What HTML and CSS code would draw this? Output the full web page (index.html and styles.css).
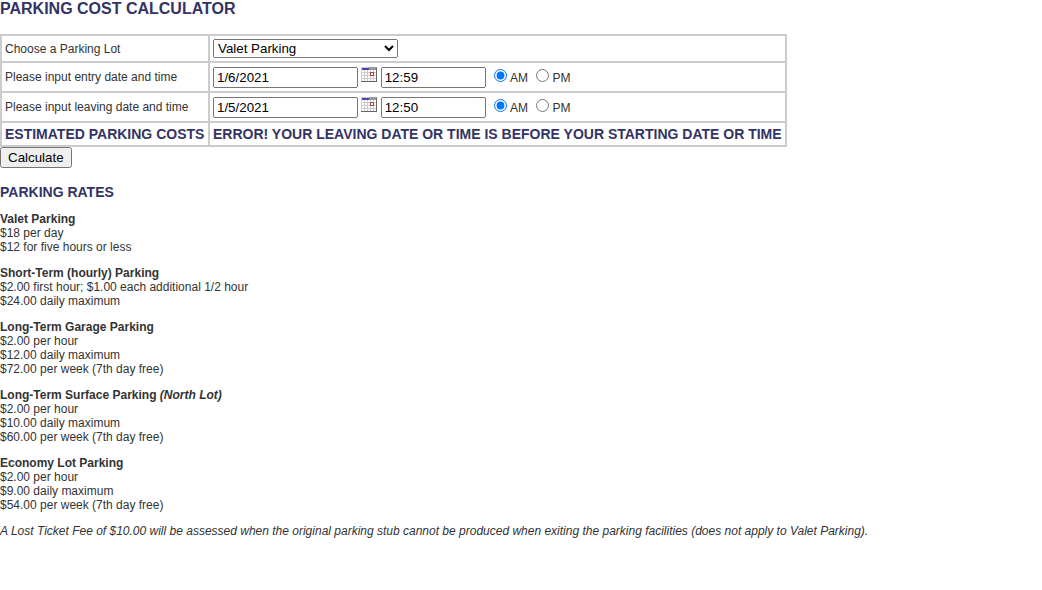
FILE: index.html
```
<!DOCTYPE html>
<html lang="en">
<head>
<meta charset="utf-8">
<title>Parking Cost Calculator</title>
<link rel="stylesheet" href="styles.css">
</head>
<body>
<svg class="defs" aria-hidden="true">
  <symbol id="calendar" viewBox="0 0 16 15">
    <path fill="#ccc" d="M0 0h16v15H0z"/>
    <path fill="#fff" d="M1 3h2v2H1zM4 3h2v2H4zM7 3h2v2H7zM10 3h2v2h-2zM13 3h2v2h-2zM1 6h2v2H1zM4 6h2v2H4zM7 6h2v2H7zM10 6h2v2h-2zM13 6h2v2h-2zM1 9h2v2H1zM4 9h2v2H4zM7 9h2v2H7zM10 9h2v2h-2zM13 9h2v2h-2zM1 12h2v2H1zM4 12h2v2H4zM7 12h2v2H7zM10 12h2v2h-2zM13 12h2v2h-2z"/>
    <path fill="#999" d="M8 0h8v3H8z"/>
    <path fill="#44a" d="M1 1h7v2H1z"/>
    <path fill="none" stroke="#a33" d="M9.500 5.500h3v3h-3z"/>
    <path fill="#666" d="M15 1h1v14H0v-1h15z"/>
  </symbol>
</svg>
<h1 class="title">PARKING COST CALCULATOR</h1>
<form>
  <table class="calculator">
    <tr>
      <td class="name"><label for="lot">Choose a Parking Lot</label></td>
      <td><select id="lot" class="lot"><option>Valet Parking</option><option>Short-Term Parking</option><option>Economy Parking</option><option>Long-Term Surface Parking</option><option>Long-Term Garage Parking</option></select></td>
    </tr>
    <tr>
      <td><label for="entry-date">Please input entry date and time</label></td>
      <td>
        <input id="entry-date" class="date" type="text" value="1/6/2021">
        <a href="#" aria-label="Pick entry date"><svg class="calendar"><use href="#calendar"/></svg></a>
        <input class="time" type="text" value="12:59" aria-label="Entry time">
        <input id="entry-am" type="radio" name="entry" checked><label for="entry-am">AM</label>
        <input id="entry-pm" type="radio" name="entry"><label for="entry-pm">PM</label>
      </td>
    </tr>
    <tr>
      <td><label for="exit-date">Please input leaving date and time</label></td>
      <td>
        <input id="exit-date" class="date" type="text" value="1/5/2021">
        <a href="#" aria-label="Pick leaving date"><svg class="calendar"><use href="#calendar"/></svg></a>
        <input class="time" type="text" value="12:50" aria-label="Leaving time">
        <input id="exit-am" type="radio" name="exit" checked><label for="exit-am">AM</label>
        <input id="exit-pm" type="radio" name="exit"><label for="exit-pm">PM</label>
      </td>
    </tr>
    <tr class="result">
      <td>ESTIMATED PARKING COSTS</td>
      <td>ERROR! YOUR LEAVING DATE OR TIME IS BEFORE YOUR STARTING DATE OR TIME</td>
    </tr>
  </table>
  <button class="calculate" type="submit">Calculate</button>
</form>
<h2 class="subtitle">PARKING RATES</h2>
<p><b>Valet Parking</b><br>$18 per day<br>$12 for five hours or less</p>
<p><b>Short-Term (hourly) Parking</b><br>$2.00 first hour; $1.00 each additional 1/2 hour<br>$24.00 daily maximum</p>
<p><b>Long-Term Garage Parking</b><br>$2.00 per hour<br>$12.00 daily maximum<br>$72.00 per week (7th day free)</p>
<p><b>Long-Term Surface Parking <i>(North Lot)</i></b><br>$2.00 per hour<br>$10.00 daily maximum<br>$60.00 per week (7th day free)</p>
<p><b>Economy Lot Parking</b><br>$2.00 per hour<br>$9.00 daily maximum<br>$54.00 per week (7th day free)</p>
<p><i>A Lost Ticket Fee of $10.00 will be assessed when the original parking stub cannot be produced when exiting the parking facilities (does not apply to Valet Parking).</i></p>
</body>
</html>
```
FILE: styles.css
```
body {
  margin: 0;
  color: #333;
  font: 12px/14px "Liberation Sans", Arial, sans-serif;
}
.defs { display: none; }
.title {
  margin: 0 0 17px;
  color: #336;
  font-size: 16px;
  line-height: 17px;
}
.calculator {
  border: 1px solid #ccc;
  border-collapse: collapse;
}
.calculator td {
  border: 2px solid #ccc;
  padding: 3px;
}
.calculator .name {
  min-width: 200px;
}
.result {
  color: #336;
  font-size: 14px;
  font-weight: bold;
  line-height: 16px;
}
input, select, button {
  font-family: "Liberation Sans", Arial, sans-serif;
}
.lot { width: 185px; }
.date { width: 145px; box-sizing: border-box; }
.time { width: 105px; box-sizing: border-box; }
.calendar { width: 16px; height: 15px; }
.calculate { display: block; }
.subtitle {
  margin: 16px 0 12px;
  color: #336;
  font-size: 14px;
  line-height: 16px;
}
p { margin: 0 0 12px; }
```
